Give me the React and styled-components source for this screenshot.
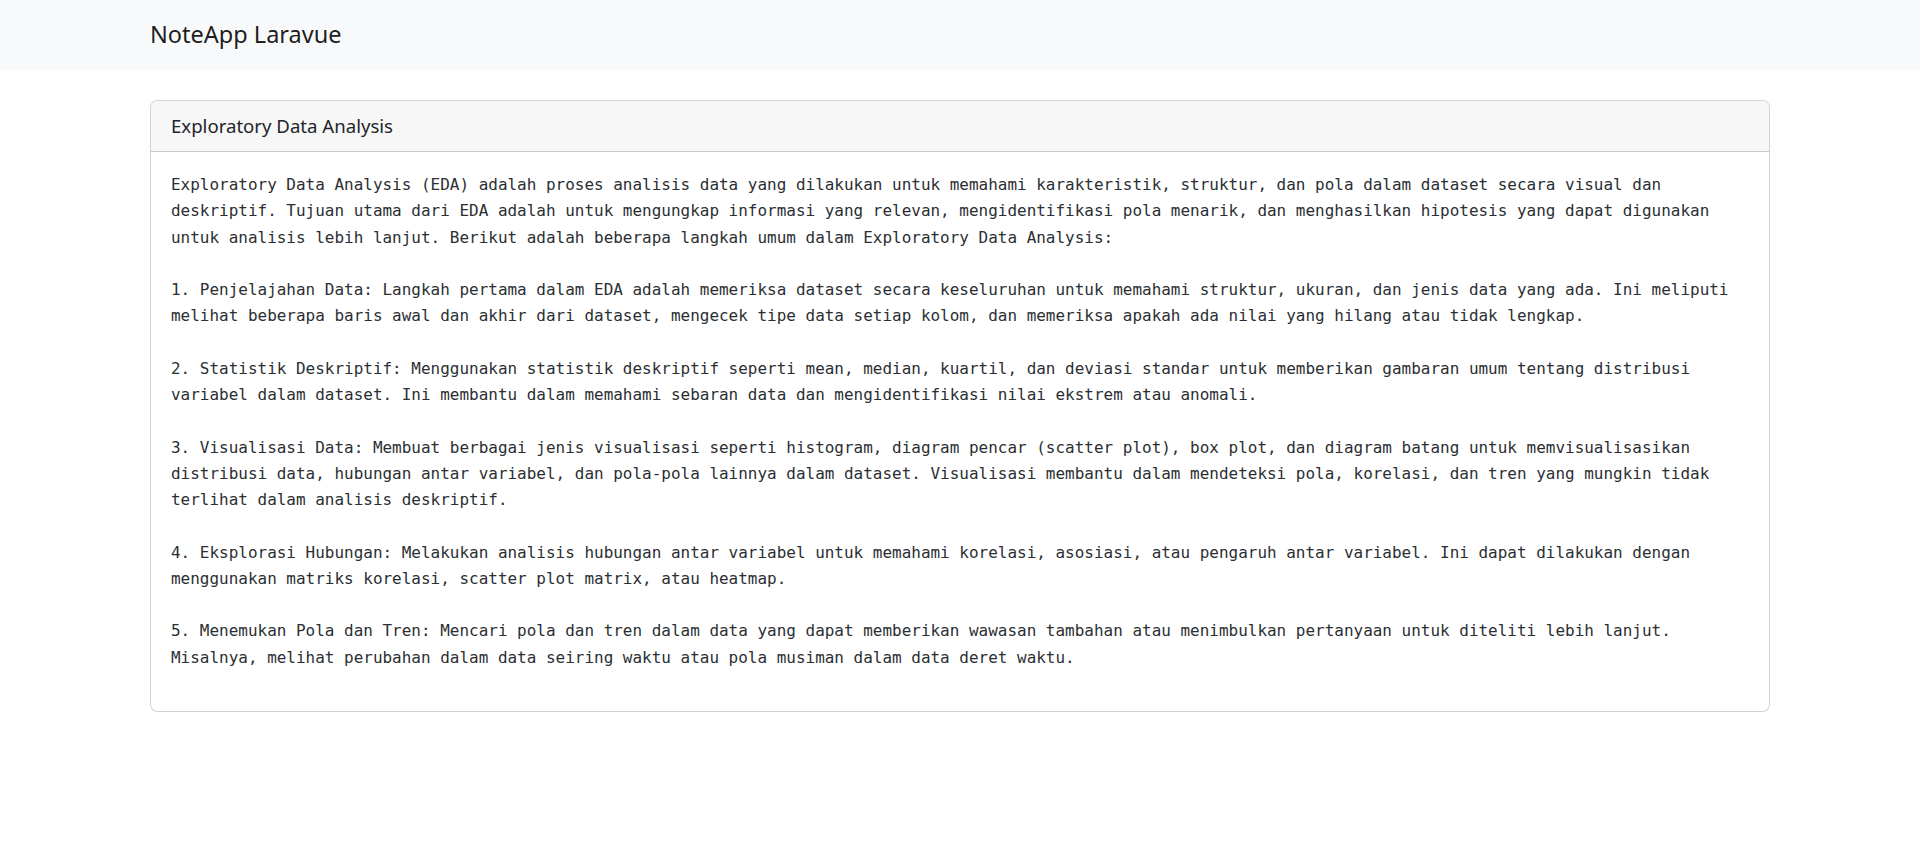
import React from "react";
import styled, { createGlobalStyle } from "styled-components";

const Global = createGlobalStyle`
  html, body { margin: 0; padding: 0; background: #fff; }
  body {
    font-family: "Noto Sans", "Open Sans", sans-serif;
    color: #212529;
  }
  * { box-sizing: border-box; }
`;

const Navbar = styled.nav`
  background: #f8f9fa;
  padding: 10px 0;
`;

const Container = styled.div`
  width: 1650px;
  margin: 0 auto;
  padding: 0 15px;
`;

const Brand = styled.a`
  display: inline-block;
  padding: 6.25px 0;
  font-size: 23.5px;
  line-height: 37.5px;
  color: rgba(0, 0, 0, 0.9);
  text-decoration: none;
`;

const Main = styled.main`
  padding-top: 30px;
`;

const Card = styled.section`
  border: 1px solid rgba(0, 0, 0, 0.175);
  border-radius: 7.5px;
  overflow: hidden;
  background: #fff;
`;

const CardHeader = styled.header`
  background: #f7f7f7;
  border-bottom: 1px solid rgba(0, 0, 0, 0.175);
  padding: 10px 20px;
  font-size: 18.6px;
  line-height: 30px;
  color: #212529;
`;

const CardBody = styled.div`
  padding: 20px;
`;

const Pre = styled.pre`
  margin: 0 0 20px;
  font-family: "DejaVu Sans Mono", "Liberation Mono", monospace;
  font-size: 15.98px;
  line-height: 26.25px;
  white-space: pre-wrap;
  word-wrap: break-word;
  color: #2b2f33;
`;

const text = `Exploratory Data Analysis (EDA) adalah proses analisis data yang dilakukan untuk memahami karakteristik, struktur, dan pola dalam dataset secara visual dan deskriptif. Tujuan utama dari EDA adalah untuk mengungkap informasi yang relevan, mengidentifikasi pola menarik, dan menghasilkan hipotesis yang dapat digunakan untuk analisis lebih lanjut. Berikut adalah beberapa langkah umum dalam Exploratory Data Analysis:

1. Penjelajahan Data: Langkah pertama dalam EDA adalah memeriksa dataset secara keseluruhan untuk memahami struktur, ukuran, dan jenis data yang ada. Ini meliputi melihat beberapa baris awal dan akhir dari dataset, mengecek tipe data setiap kolom, dan memeriksa apakah ada nilai yang hilang atau tidak lengkap.

2. Statistik Deskriptif: Menggunakan statistik deskriptif seperti mean, median, kuartil, dan deviasi standar untuk memberikan gambaran umum tentang distribusi variabel dalam dataset. Ini membantu dalam memahami sebaran data dan mengidentifikasi nilai ekstrem atau anomali.

3. Visualisasi Data: Membuat berbagai jenis visualisasi seperti histogram, diagram pencar (scatter plot), box plot, dan diagram batang untuk memvisualisasikan distribusi data, hubungan antar variabel, dan pola-pola lainnya dalam dataset. Visualisasi membantu dalam mendeteksi pola, korelasi, dan tren yang mungkin tidak terlihat dalam analisis deskriptif.

4. Eksplorasi Hubungan: Melakukan analisis hubungan antar variabel untuk memahami korelasi, asosiasi, atau pengaruh antar variabel. Ini dapat dilakukan dengan menggunakan matriks korelasi, scatter plot matrix, atau heatmap.

5. Menemukan Pola dan Tren: Mencari pola dan tren dalam data yang dapat memberikan wawasan tambahan atau menimbulkan pertanyaan untuk diteliti lebih lanjut. Misalnya, melihat perubahan dalam data seiring waktu atau pola musiman dalam data deret waktu.`;

export default function App() {
  return (
    <>
      <Global />
      <Navbar>
        <Container>
          <Brand href="#">NoteApp Laravue</Brand>
        </Container>
      </Navbar>
      <Main>
        <Container>
          <Card>
            <CardHeader>Exploratory Data Analysis</CardHeader>
            <CardBody>
              <Pre>{text}</Pre>
            </CardBody>
          </Card>
        </Container>
      </Main>
    </>
  );
}
